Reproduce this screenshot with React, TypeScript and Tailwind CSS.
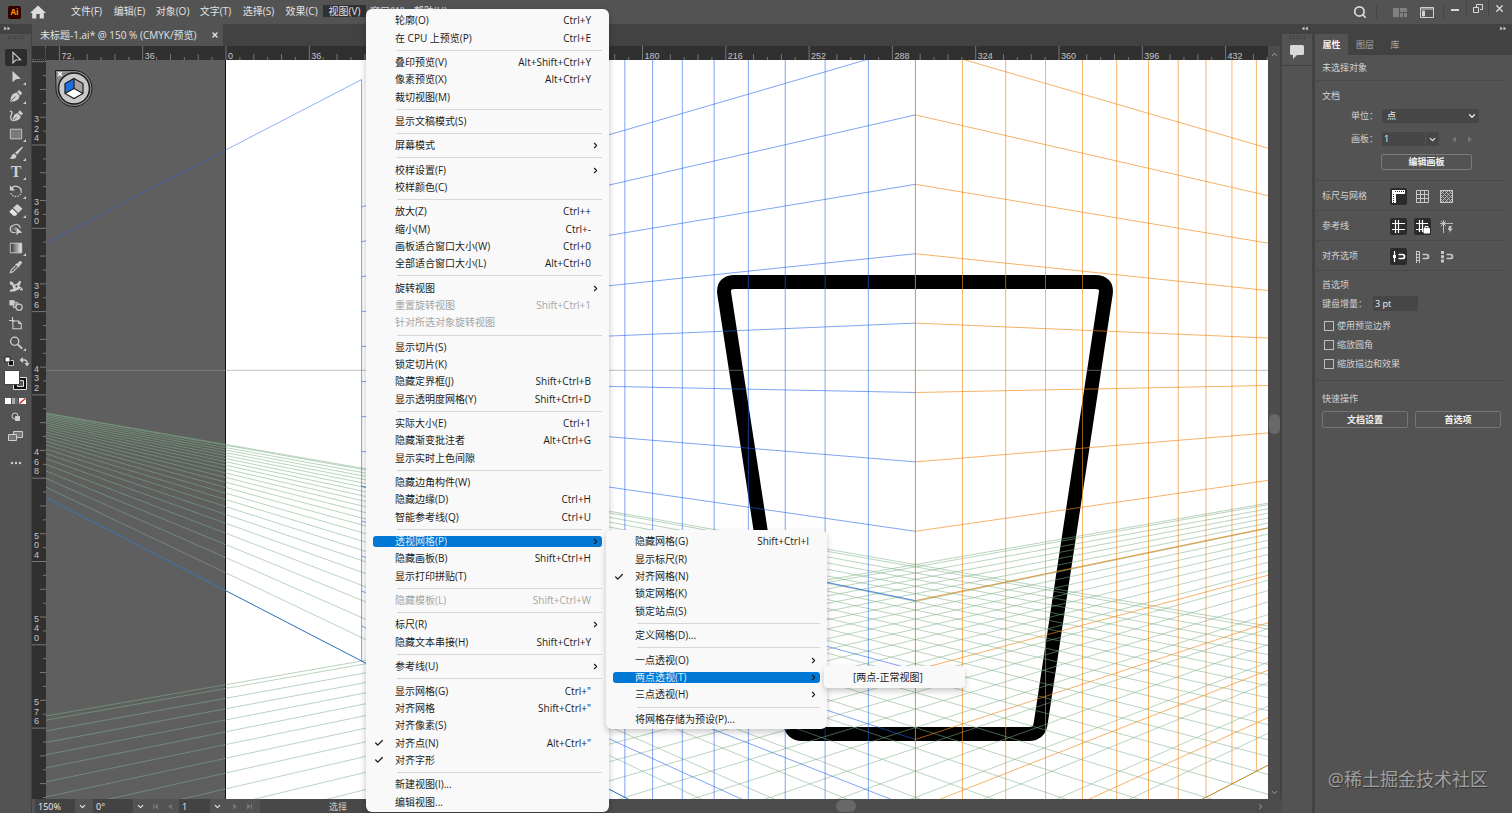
import type { ReactNode } from 'react';
import { Search, X, ChevronDown, ChevronRight, ChevronUp, Check } from 'lucide-react';

type MenuEntry = {
  label: string;
  keys?: string;
  sub?: boolean;
  checked?: boolean;
  disabled?: boolean;
  active?: boolean;
};

const menuBar = ['文件(F)', '编辑(E)', '对象(O)', '文字(T)', '选择(S)', '效果(C)', '视图(V)', '窗口(W)', '帮助(H)'];

const viewMenu: MenuEntry[][] = [
  [
    { label: '轮廓(O)', keys: 'Ctrl+Y' },
    { label: '在 CPU 上预览(P)', keys: 'Ctrl+E' },
  ],
  [
    { label: '叠印预览(V)', keys: 'Alt+Shift+Ctrl+Y' },
    { label: '像素预览(X)', keys: 'Alt+Ctrl+Y' },
    { label: '裁切视图(M)' },
  ],
  [{ label: '显示文稿模式(S)' }],
  [{ label: '屏幕模式', sub: true }],
  [{ label: '校样设置(F)', sub: true }, { label: '校样颜色(C)' }],
  [
    { label: '放大(Z)', keys: 'Ctrl++' },
    { label: '缩小(M)', keys: 'Ctrl+-' },
    { label: '画板适合窗口大小(W)', keys: 'Ctrl+0' },
    { label: '全部适合窗口大小(L)', keys: 'Alt+Ctrl+0' },
  ],
  [
    { label: '旋转视图', sub: true },
    { label: '重置旋转视图', keys: 'Shift+Ctrl+1', disabled: true },
    { label: '针对所选对象旋转视图', disabled: true },
  ],
  [
    { label: '显示切片(S)' },
    { label: '锁定切片(K)' },
    { label: '隐藏定界框(J)', keys: 'Shift+Ctrl+B' },
    { label: '显示透明度网格(Y)', keys: 'Shift+Ctrl+D' },
  ],
  [
    { label: '实际大小(E)', keys: 'Ctrl+1' },
    { label: '隐藏渐变批注者', keys: 'Alt+Ctrl+G' },
    { label: '显示实时上色间隙' },
  ],
  [
    { label: '隐藏边角构件(W)' },
    { label: '隐藏边缘(D)', keys: 'Ctrl+H' },
    { label: '智能参考线(Q)', keys: 'Ctrl+U' },
  ],
  [
    { label: '透视网格(P)', sub: true, active: true },
    { label: '隐藏画板(B)', keys: 'Shift+Ctrl+H' },
    { label: '显示打印拼贴(T)' },
  ],
  [{ label: '隐藏模板(L)', keys: 'Shift+Ctrl+W', disabled: true }],
  [{ label: '标尺(R)', sub: true }, { label: '隐藏文本串接(H)', keys: 'Shift+Ctrl+Y' }],
  [{ label: '参考线(U)', sub: true }],
  [
    { label: '显示网格(G)', keys: 'Ctrl+"' },
    { label: '对齐网格', keys: 'Shift+Ctrl+"' },
    { label: '对齐像素(S)' },
    { label: '对齐点(N)', keys: 'Alt+Ctrl+"', checked: true },
    { label: '对齐字形', checked: true },
  ],
  [{ label: '新建视图(I)...' }, { label: '编辑视图...' }],
];

const gridMenu: MenuEntry[][] = [
  [
    { label: '隐藏网格(G)', keys: 'Shift+Ctrl+I' },
    { label: '显示标尺(R)' },
    { label: '对齐网格(N)', checked: true },
    { label: '锁定网格(K)' },
    { label: '锁定站点(S)' },
  ],
  [{ label: '定义网格(D)...' }],
  [
    { label: '一点透视(O)', sub: true },
    { label: '两点透视(T)', sub: true, active: true },
    { label: '三点透视(H)', sub: true },
  ],
  [{ label: '将网格存储为预设(P)...' }],
];

const MenuList = ({ groups }: { groups: MenuEntry[][] }) => (
  <>
    {groups.map((group, gi) => (
      <div key={gi} className="contents">
        {gi > 0 && (
          <div className="flex h-[7px] shrink-0 items-center pr-[7px] pl-[31px]">
            <div className="h-px w-full bg-[#d6d6d6]" />
          </div>
        )}
        {group.map((item) => (
          <button
            key={item.label}
            type="button"
            role="menuitem"
            disabled={item.disabled}
            className={`flex min-h-0 flex-1 items-center px-[7px] ${
              item.active ? 'text-[#d9ecfb]' : item.disabled ? 'text-[#a5a5a5]' : 'text-[#1b1b1b]'
            }`}
          >
            <span className={`flex h-[11px] w-full items-center rounded-[3px] ${item.active ? 'bg-[#0078d4]' : ''}`}>
              <span className="w-[22px] shrink-0 pl-px">{item.checked && <Check size={10} strokeWidth={3} />}</span>
              <span className="grow text-left">{item.label}</span>
              {item.keys && <span className="pr-[11px]">{item.keys}</span>}
              {item.sub && <ChevronRight size={9} strokeWidth={3} className="mr-[2px] text-[#1b1b1b]" />}
            </span>
          </button>
        ))}
      </div>
    ))}
  </>
);

/* ---------- toolbar ---------- */

const tools: { name: string; more?: boolean; icon: ReactNode }[] = [
  { name: '选择工具', icon: <path d="M4.5 1.5v12l3.3-3.2 5.4-.3z" fill="none" stroke="currentColor" strokeWidth="1.3" /> },
  { name: '直接选择工具', more: true, icon: <path d="M4 1v13l4-3.5 5.5-.5z" /> },
  {
    name: '钢笔工具',
    more: true,
    icon: (
      <>
        <path d="M1.500 14.500c.3-4.500 1.200-7.500 3.500-9L8.500 4l3.700 3.700-1.200 3.500C9.500 13.500 6 14.500 1.500 14.500z" />
        <path d="M9.300 3.300 11.500 1 15.200 4.800l-2.200 2.200z" />
        <path d="M2.500 13.500 7.500 8.500" stroke="#535353" />
      </>
    ),
  },
  {
    name: '曲率工具',
    icon: (
      <>
        <path d="M4 15c.3-4 1.200-6.500 3-8l2.500-1.200 4 4-1.200 2.500C10.500 14 8 15 4 15z" />
        <path d="M10.300 5 12.300 2.700 16 6.300 13.900 8.600z" />
        <path d="M1 3.500c2 0 3 1 2 3.500S.5 12 4 14.500" fill="none" stroke="currentColor" strokeWidth="1.500" />
        <path d="M5 14l4-4" stroke="#535353" />
      </>
    ),
  },
  { name: '矩形工具', more: true, icon: <path d="M1.500 2.500h13v11h-13z" fill="#7a7a7a" stroke="currentColor" /> },
  {
    name: '画笔工具',
    more: true,
    icon: (
      <>
        <path d="M15 .5 7 7.800l2.200 2.200 6.800-8.500z" />
        <path d="M6 8.500 8.500 11c0 3.500-3.500 4.500-8 3.300 2.500-.5 1.800-5 5.500-5.800z" />
      </>
    ),
  },
  {
    name: '文字工具',
    more: true,
    icon: (
      <text x="8" y="14" textAnchor="middle" fontSize="18" fontWeight="bold" fontFamily="Liberation Serif, serif">
        T
      </text>
    ),
  },
  {
    name: '旋转工具',
    more: true,
    icon: (
      <>
        <path d="M3 4.500C7 .5 14 3 14 8.500" fill="none" stroke="currentColor" strokeWidth="1.500" />
        <path d="M14 8.500c0 7-11 8-12 1" fill="none" stroke="currentColor" strokeWidth="1.500" strokeDasharray="1.500 1.500" />
        <path d="M1 1.500v6h6z" />
      </>
    ),
  },
  {
    name: '橡皮擦工具',
    more: true,
    icon: (
      <>
        <path d="M9.500 1 15.500 6.500l-5 5L4.500 5.500z" />
        <path d="M3.700 6.500 9.700 12.300 7.700 14.500H5L1 10.500V9.500z" fill="#e6e6e6" />
      </>
    ),
  },
  {
    name: '形状生成器工具',
    icon: (
      <>
        <path d="M7.500 12H5a4 4 0 0 1-.5-7.900A5 5 0 0 1 13 7" fill="none" stroke="currentColor" strokeWidth="1.300" />
        <path d="M3 8h6M7 5v6" stroke="currentColor" strokeDasharray="1 1" />
        <path d="M8.500 6v9l2.700-2.500 4-.2z" />
      </>
    ),
  },
  { name: '渐变工具', more: true, icon: <path d="M1.500 2.500h13v11h-13z" fill="url(#toolFade)" stroke="currentColor" /> },
  {
    name: '吸管工具',
    icon: (
      <>
        <path d="M9 4.500 12 1.500c1.500-1 3.500 1 2.500 2.500l-3 3 .7.700-1.200 1.200L7.100 5l1.200-1.200z" />
        <path d="M7.500 6.500 2.500 11.500 1.500 14.500l3-1 5-5" fill="none" stroke="currentColor" strokeWidth="1.300" />
      </>
    ),
  },
  {
    name: '操控变形工具',
    icon: (
      <>
        <path d="M1 3c3-.5 4 1 4.500 3.500C7 5.500 9 6 10 4.500L12 2l2 1-1.500 3.500L11.500 8l4 2.500v3l-5-1.500-3.500 2-6 .5v-2L5 11 3.500 7 1 6z" />
        <circle cx="8.500" cy="8.500" r="1.300" fill="#535353" />
        <path d="M1 9.500h3M11 13l3-3" stroke="#535353" />
      </>
    ),
  },
  {
    name: '混合工具',
    icon: (
      <>
        <path d="M.5 2.500h6v6h-6z" />
        <path d="M5 5h5v6H5z" fill="#8f8f8f" stroke="currentColor" />
        <circle cx="11.500" cy="10.500" r="3.500" fill="#535353" stroke="currentColor" strokeWidth="1.300" />
      </>
    ),
  },
  {
    name: '画板工具',
    icon: <path d="M4 0v6M0 4h6M4.500 4.500h6.500l3 3v6h-9.500zM11 4.500v3h3" fill="none" stroke="currentColor" strokeWidth="1.200" />,
  },
  {
    name: '缩放工具',
    more: true,
    icon: (
      <>
        <circle cx="6.500" cy="6" r="4.700" fill="none" stroke="currentColor" strokeWidth="1.500" />
        <path d="m10 9.500 5 5" stroke="currentColor" strokeWidth="2.200" />
      </>
    ),
  },
];

const DoubleArrow = ({ left = false }: { left?: boolean }) => (
  <svg width="6" height="9" viewBox="0 0 6 9" fill="#d0d0d0">
    {left ? <path d="M2.500 2.500v4l-2.500-2zM5.800 2.500v4l-2.500-2z" /> : <path d="M.2 2.500v4l2.500-2zM3.500 2.500v4l2.500-2z" />}
  </svg>
);

const Toolbar = () => (
  <aside className="flex w-8 shrink-0 flex-col border-r border-[#424242] bg-[#535353] text-[#cfcfcf]">
    <div className="h-[10px] bg-[#424242] pl-1">
      <DoubleArrow />
    </div>
    <div className="mx-auto mt-[2px] mb-[9px] h-[3px] w-4 border-y border-dotted border-[#3a3a3a]" />
    {tools.map((tool, i) => (
      <button
        key={tool.name}
        type="button"
        aria-label={tool.name}
        className="relative flex h-[19px] w-full shrink-0 items-center justify-center"
      >
        <span className={`flex h-[17px] w-[22px] items-center justify-center rounded-[2px] ${i === 0 ? 'bg-[#2d2d2d]' : ''}`}>
          <svg width="14" height="14" viewBox="0 0 16 16" fill="currentColor">
            {tool.name === '渐变工具' && (
              <linearGradient id="toolFade">
                <stop stopColor="#333" />
                <stop offset="1" stopColor="#eee" />
              </linearGradient>
            )}
            {tool.icon}
          </svg>
        </span>
        {tool.more && (
          <svg className="absolute right-[5px] bottom-px" width="3" height="3" viewBox="0 0 3 3">
            <path d="M3 0v3H0z" fill="#cfcfcf" />
          </svg>
        )}
      </button>
    ))}
    <button type="button" aria-label="填色和描边" className="mt-1 flex justify-center">
      <svg width="28" height="54" viewBox="0 0 28 54" fill="none">
        <path d="M6.500 4.500h5v5h-5z" fill="#111" stroke="#ccc" />
        <path d="M3 1h5v5H3z" fill="#fff" stroke="#222" />
        <path d="M20 4h2.500c2 0 2.500 1 2.500 3" stroke="#ccc" strokeWidth="1.300" />
        <path d="m21 1-3.500 3L21 7zM22.500 7h5L25 10.500z" fill="#ccc" />
        <path d="M11.500 21.500h13v12h-13z" fill="#111" stroke="#ddd" />
        <path d="M15.500 24.500h6v6h-6z" fill="#535353" stroke="#ddd" />
        <path d="M2.500 14.500h15v14h-15z" fill="#fff" stroke="#444" />
        <path d="M3 42h6v6H3z" fill="#fff" />
        <path d="M10 42h6v6h-6z" fill="#aaa" />
        <path d="M13 42h3v6h-3z" fill="#666" />
        <path d="M17 42h7v6h-7z" fill="#fff" />
        <path d="m17.500 47.500 6-5" stroke="#d22" strokeWidth="1.500" />
      </svg>
    </button>
    <button type="button" aria-label="绘图模式" className="flex h-[14px] items-center justify-center">
      <svg width="12" height="12" viewBox="0 0 12 12" fill="none" stroke="currentColor">
        <circle cx="5" cy="5" r="3" />
        <path d="M5.500 5.500h4v4h-4z" fill="#cfcfcf" />
      </svg>
    </button>
    <button type="button" aria-label="更改屏幕模式" className="flex h-6 items-center justify-center">
      <svg width="15" height="12" viewBox="0 0 15 12" fill="#777" stroke="currentColor">
        <path d="M5.500 1.500h9v6h-9z" />
        <path d="M.5 4.500h8v6h-8z" />
      </svg>
    </button>
    <button type="button" aria-label="编辑工具栏" className="mt-[7px] flex h-4 items-center justify-center">
      <svg width="12" height="4" viewBox="0 0 12 4" fill="currentColor">
        <circle cx="2" cy="2" r="1.200" />
        <circle cx="6" cy="2" r="1.200" />
        <circle cx="10" cy="2" r="1.200" />
      </svg>
    </button>
  </aside>
);

/* ---------- rulers and canvas ---------- */

const UNIT = 83.3;

const HRuler = () => {
  const ticks = [];
  for (let i = -12; i < 76; i++) {
    const x = 180 + (i * UNIT) / 6;
    const major = i % 6 === 0;
    ticks.push(<path key={i} d={`M${x} ${major ? 0 : i % 2 ? 11 : 8}V14`} stroke="#777" />);
    if (major) {
      ticks.push(
        <text key={`t${i}`} x={x + 2} y="13" fontSize="9" fill="#c4c4c4">
          {Math.abs(i * 6)}
        </text>,
      );
    }
  }
  return (
    <svg className="h-[14px] w-full bg-[#303030]" fontFamily="Liberation Sans, sans-serif">
      {ticks}
    </svg>
  );
};

const VRuler = () => {
  const ticks = [];
  for (let i = -6; i < 54; i++) {
    const y = 85 + (i * UNIT) / 6;
    const major = i % 6 === 0;
    ticks.push(<path key={i} d={`M${major ? 0 : i % 2 ? 11 : 8} ${y}H14`} stroke="#777" />);
    if (major && i >= 0 && i <= 42) {
      String(324 + i * 6)
        .split('')
        .forEach((digit, k) =>
          ticks.push(
            <text key={`${i}-${k}`} x="2" y={y - 23 + k * 9.5} fontSize="9" fill="#c4c4c4">
              {digit}
            </text>,
          ),
        );
    }
  }
  return (
    <svg className="h-full w-[14px] shrink-0 bg-[#303030]" fontFamily="Liberation Sans, sans-serif">
      {ticks}
    </svg>
  );
};

// two point perspective grid
const CX = 915.4;
const HY = 370.3;
const D = 1115;
const K = 22.7;
const CELL = 69.4;
const FLOOR = 577.6;
const LAST = 22.4;

const offset = (n: number) => (D * n) / (n + K);
const EDGE = offset(LAST);

const Artwork = () => {
  const wall = (dir: number) => {
    const parts = [];
    for (let n = 1; n <= 22; n++) {
      const d = offset(n);
      const h = FLOOR * (1 - d / D);
      parts.push(`M${CX + dir * d} ${HY - h}V${HY + h}`);
    }
    const eh = FLOOR * (1 - EDGE / D);
    parts.push(`M${CX + dir * EDGE} ${HY - eh}V${HY + eh}`);
    for (let r = -8; r <= 4; r++) {
      const h = 230.4 + r * CELL;
      parts.push(`M${CX} ${HY + h}L${CX + dir * EDGE} ${HY + h * (1 - EDGE / D)}`);
    }
    return parts.join('');
  };
  // floor lines run through each vanishing point
  const floor = [];
  for (const n of [...Array(23).keys(), LAST]) {
    const drop = ((FLOOR * K) / (2 * n + K)) * 2;
    floor.push(`M${CX - D} ${HY}L${CX + D} ${HY + drop}M${CX + D} ${HY}L${CX - D} ${HY + drop}`);
  }
  const bottom = (dir: number) => `M${CX + dir * D} ${HY}L${CX} ${HY + FLOOR}`;
  const base = (dir: number) => `M${CX + dir * EDGE} ${HY + 230.4 * (1 - EDGE / D)}L${CX} ${HY + 230.4}`;

  return (
    <svg className="h-full min-w-0 flex-1 bg-[#5f5f5f]" role="img" aria-label="画板">
      <g transform="translate(-46 -60)" fill="none">
        <path d="M226 0H1400V900H226z" fill="#fff" />
        <path d="M225.500 0V900" stroke="#111" />
        <path
          d="M735 282H1095Q1107.500 282 1105.700 294L1040.600 724Q1039 734 1029 734H802Q792 734 790.400 724L724.300 294Q722.500 282 735 282Z"
          stroke="#000"
          strokeWidth="14"
        />
        <path d={floor.join('')} stroke="#80b086" strokeOpacity=".55" />
        <path d={`M0 ${HY}H1400`} stroke="#8a968a" strokeOpacity=".6" />
        <path d={wall(-1)} stroke="#2463ea" strokeOpacity=".58" />
        <path d={wall(1)} stroke="#f08a1c" strokeOpacity=".66" />
        <path d={`M${CX - D} ${HY}L${CX - EDGE} ${HY - FLOOR * (1 - EDGE / D)}`} stroke="#2463ea" strokeOpacity=".5" />
        <path d={base(-1)} stroke="#2468c8" strokeOpacity=".4" />
        <path d={base(1)} stroke="#c8841a" strokeOpacity=".4" />
        <path d={bottom(-1)} stroke="#2468c8" strokeOpacity=".85" />
        <path d={bottom(1)} stroke="#c8841a" strokeOpacity=".85" />
        <path d={`M${CX} 0V900`} stroke="#cf8432" strokeOpacity=".9" />

        {/* plane switching widget */}
        <path d="M55.500 70.500H74A18 18 0 1 1 56 88.500z" fill="#8a8a8a" stroke="#1c1c1c" />
        <circle cx="74" cy="88.500" r="15.500" fill="#c9c9c9" stroke="#1c1c1c" strokeWidth="1.500" />
        <path d="m74 78.500-9 5v10l9-5z" fill="#1f6fe0" />
        <path d="m74 78.500 9 5v10l-9-5z" fill="#a8a0a0" />
        <path d="m74 88.500 9 5-9 5-9-5z" fill="#fff" />
        <path d="m74 78.500 9 5v10l-9 5-9-5v-10zM74 78.500v10l9 5M74 88.500l-9 5" stroke="#1c1c1c" strokeWidth="1.200" />
        <path d="m58 72 4 4M62 72l-4 4" stroke="#fff" strokeWidth="1.200" />
      </g>
    </svg>
  );
};

/* ---------- status bar ---------- */

const Combo = ({ label, value, className }: { label: string; value: string; className: string }) => (
  <div className="flex h-full items-center">
    <input aria-label={label} defaultValue={value} className={`h-full bg-[#434343] pl-[3px] text-[9px] text-[#f0f0f0] ${className}`} />
    <button type="button" aria-label={`${label}列表`} className="flex w-[14px] justify-center text-[#e8e8e8]">
      <ChevronDown size={9} strokeWidth={3} />
    </button>
  </div>
);

const Step = ({ label, flip, bar }: { label: string; flip?: boolean; bar?: boolean }) => (
  <button type="button" aria-label={label} className="flex w-[14px] justify-center">
    <svg width="8" height="7" viewBox="0 0 8 7" fill="#757575" stroke="none">
      {flip ? <path d="M2 .5v6l4-3z" /> : <path d="M6 .5v6l-4-3z" />}
      {bar && <path d={flip ? 'M6 .5h1v6H6z' : 'M1 .5h1v6H1z'} />}
    </svg>
  </button>
);

const StatusBar = () => (
  <footer className="flex h-[14px] shrink-0 items-center bg-[#535353] pl-[3px]">
    <Combo label="缩放" value="150%" className="w-[40px]" />
    <div className="w-[4px]" />
    <Combo label="旋转" value="0°" className="w-[40px]" />
    <div className="flex w-[32px] justify-center">
      <Step label="首个画板" bar />
      <Step label="上一个画板" />
    </div>
    <Combo label="画板" value="1" className="w-[31px]" />
    <div className="flex w-[36px] justify-center">
      <Step label="下一个画板" flip />
      <Step label="末个画板" flip bar />
    </div>
    <div className="flex h-full w-[330px] items-center bg-[#484848] pt-[2px] pl-[69px] text-[9px] text-[#d0d0d0]">选择</div>
    <div className="flex h-full min-w-0 grow items-center bg-[#4c4c4c]">
      <div className="flex grow">
        <div className="ml-[37%] h-3 w-5 rounded-full bg-[#686868]" />
      </div>
      <ChevronRight size={9} className="mr-[17px] text-[#bbb]" />
    </div>
  </footer>
);

/* ---------- properties panel ---------- */

const IconButton = ({ label, on, children }: { label: string; on?: boolean; children: ReactNode }) => (
  <button
    type="button"
    aria-label={label}
    aria-pressed={!!on}
    className={`flex size-[17px] items-center justify-center rounded-[2px] ${on ? 'bg-[#2b2b2b] text-white' : 'text-[#c8c8c8]'}`}
  >
    <svg width="15" height="15" viewBox="0 0 15 15" fill="none" stroke="currentColor">
      {children}
    </svg>
  </button>
);

const IconRow = ({ title, children }: { title: string; children: ReactNode }) => (
  <div className="flex h-[30px] items-center border-b border-[#494949] pt-px pl-[6px]">
    <span className="w-[68px]">{title}</span>
    <div className="flex gap-[7px]">{children}</div>
  </div>
);

const Magnet = () => <path d="M7.500 5.500h4a2 2 0 0 1 0 4h-4" strokeWidth="1.700" />;

const Properties = () => (
  <aside className="flex w-[200px] shrink-0 flex-col border-l-[3px] border-[#424242] bg-[#535353] text-[9px] leading-4 text-[#d2d2d2]">
    <div className="flex h-[10px] justify-end bg-[#424242] pr-[6px]">
      <DoubleArrow />
    </div>
    <div role="tablist" className="flex h-[21px] bg-[#424242] text-[#a8a8a8]">
      <button type="button" role="tab" className="w-[33px] bg-[#535353] font-bold text-[#f2f2f2]">
        属性
      </button>
      <button type="button" role="tab" className="w-[34px]">
        图层
      </button>
      <button type="button" role="tab" className="w-[26px]">
        库
      </button>
    </div>
    <div className="flex flex-col pr-[7px] pl-px">
      <div className="flex h-[26px] items-center border-b border-[#494949] pt-px pl-[6px]">未选择对象</div>

      <section className="h-[100px] border-b border-[#494949] pt-[7px] pl-[6px]">
        <h2>文档</h2>
        <div className="mt-[5px] flex h-[14px] items-center">
          <label htmlFor="unit" className="w-[60px] pr-[4px] text-right">
            单位：
          </label>
          <div className="relative flex items-center">
            <select id="unit" className="h-[14px] w-[97px] appearance-none rounded-[2px] bg-[#464646] pl-[5px] text-[9px] leading-[14px] text-[#f2f2f2]">
              <option>点</option>
            </select>
            <ChevronDown size={10} strokeWidth={3} className="pointer-events-none absolute right-[2px] text-[#eee]" />
          </div>
        </div>
        <div className="mt-[9px] flex h-[14px] items-center">
          <label htmlFor="board" className="w-[60px] pr-[4px] text-right">
            画板：
          </label>
          <input id="board" defaultValue="1" className="h-[14px] w-[43px] bg-[#464646] pl-[2px] text-[9px] text-[#f2f2f2]" />
          <button type="button" aria-label="选择画板" className="ml-px flex h-[14px] w-[13px] items-center justify-center bg-[#464646] text-[#eee]">
            <ChevronDown size={9} strokeWidth={3} />
          </button>
          <div className="ml-[8px] flex gap-[2px]">
            <Step label="上一个" />
            <Step label="下一个" flip />
          </div>
        </div>
        <button type="button" className="mt-[8px] ml-[59px] flex h-4 w-[91px] items-center justify-center rounded-[2px] border border-[#7a7a7a] font-bold text-[#f2f2f2]">
          编辑画板
        </button>
      </section>

      <IconRow title="标尺与网格">
        <IconButton label="显示标尺" on>
          <path d="M1 1h13v4H5v9H1z" fill="#fff" stroke="none" />
          <path d="M4 2.500h10" stroke="#2b2b2b" strokeDasharray="1 1" />
          <path d="M2.500 5v9" stroke="#2b2b2b" strokeDasharray="1 1" />
        </IconButton>
        <IconButton label="显示网格">
          <path d="M1.500 1.500h12v12h-12zM5.500 1.500v12M9.500 1.500v12M1.500 5.500h12M1.500 9.500h12" />
        </IconButton>
        <IconButton label="显示透明度网格">
          <path d="M1.500 1.500h12v12h-12z" />
          <path d="M1.500 5.500l4-4M1.500 9.500l8-8M1.500 13.500l12-12M5.500 13.500l8-8M9.500 13.500l4-4M9.500 1.500l4 4M5.500 1.500l8 8M1.500 1.500l12 12M1.500 5.500l8 8M1.500 9.500l4 4" strokeWidth=".8" />
        </IconButton>
      </IconRow>
      <IconRow title="参考线">
        <IconButton label="显示参考线" on>
          <path d="M1 4.500h13M1 10.500h13M4.500 1v13M7.500 1v13" strokeWidth="1.200" />
        </IconButton>
        <IconButton label="锁定参考线" on>
          <path d="M1 4.500h12M1 10.500h7M4.500 1v12M7.500 1v12" strokeWidth="1.200" />
          <path d="M9 9.500h5.500v4.500H9z" fill="#fff" />
          <path d="M10 9V7.500h3V9" />
        </IconButton>
        <IconButton label="智能参考线">
          <path d="M1 4.500h13M4.500 1v13M2 2l5 5M7 2 2 7" strokeWidth=".9" />
          <path d="M10 7h3l-1.500 2.500H14L10 14l.8-3H9z" fill="currentColor" stroke="none" />
        </IconButton>
      </IconRow>
      <IconRow title="对齐选项">
        <IconButton label="对齐点" on>
          <path d="M3.500 2v11" strokeWidth="1.200" />
          <path d="M2 6h3v3H2z" fill="#fff" stroke="none" />
          <Magnet />
        </IconButton>
        <IconButton label="对齐像素">
          <path d="M1.500 2v12M4.500 2v12M1 2.500h4M1 5.500h4M1 8.500h4M1 11.500h4" />
          <Magnet />
        </IconButton>
        <IconButton label="对齐网格">
          <path d="M2 2h3v3H2zM2 6.200h3v3H2zM2 10.500h3v3H2z" fill="currentColor" stroke="none" />
          <Magnet />
        </IconButton>
      </IconRow>

      <section className="h-[110px] border-b border-[#494949] pt-[6px] pl-[6px]">
        <h2>首选项</h2>
        <div className="mt-[3px] mb-[5px] flex h-[15px] items-center">
          <label htmlFor="nudge" className="w-[51px]">
            键盘增量：
          </label>
          <input id="nudge" defaultValue="3 pt" className="h-[15px] w-[45px] bg-[#464646] pl-[2px] text-[9px] text-[#f2f2f2]" />
        </div>
        {['使用预览边界', '缩放圆角', '缩放描边和效果'].map((text) => (
          <label key={text} className="flex h-[19px] items-center gap-[3px] pl-[2px]">
            <input type="checkbox" className="size-[10px] appearance-none border border-[#bdbdbd]" />
            {text}
          </label>
        ))}
      </section>

      <section className="pt-[10px] pl-[6px]">
        <h2>快速操作</h2>
        <div className="mt-[4px] flex gap-[7px] font-bold text-[#f2f2f2]">
          <button type="button" className="h-[17px] w-[86px] rounded-[2px] border border-[#747474]">
            文档设置
          </button>
          <button type="button" className="h-[17px] w-[86px] rounded-[2px] border border-[#747474]">
            首选项
          </button>
        </div>
      </section>
    </div>
  </aside>
);

/* ---------- window ---------- */

const TitleBar = () => (
  <header className="flex h-6 shrink-0 items-center bg-[#535353] text-[10px] text-[#e2e2e2]">
    <div className="ml-2 flex size-[13px] items-center justify-center rounded-[2px] bg-[#300] text-[8px] font-bold text-[#ff9a00]">Ai</div>
    <button type="button" aria-label="主页" className="ml-[9px]">
      <svg width="16" height="14" viewBox="0 0 16 14" fill="#dcdcdc">
        <path d="M8 .5 16 8h-2.200v5.500H9.700V9H6.300v4.500H2.200V8H0z" />
      </svg>
    </button>
    <nav className="mt-[5px] ml-[19px] flex self-start">
      {menuBar.map((item) => (
        <button
          key={item}
          type="button"
          className={`h-3 w-[43px] text-center leading-3 whitespace-nowrap ${item === '视图(V)' ? 'bg-[#303030]' : ''}`}
        >
          {item}
        </button>
      ))}
    </nav>
    <div className="grow" />
    <button type="button" aria-label="搜索" className="text-[#d8d8d8]">
      <Search size={14} strokeWidth={3} />
    </button>
    <div className="ml-[9px] h-4 w-px bg-[#484848]" />
    <button type="button" aria-label="排列文档" className="ml-4">
      <svg width="14" height="9" viewBox="0 0 14 9" fill="#808080">
        <path d="M0 0h6v9H0zM7 0h7v4H7zM7 5h3v4H7zM11 5h3v4h-3z" />
      </svg>
    </button>
    <button type="button" aria-label="切换工作区" className="ml-[13px]">
      <svg width="14" height="11" viewBox="0 0 14 11" fill="none" stroke="#d0d0d0">
        <path d="M.5.5h13v10H.5zM.5 2h13" />
        <path d="M2.500 4h2v5h-2z" fill="#d0d0d0" />
      </svg>
    </button>
    <div className="ml-[9px] h-4 w-px bg-[#484848]" />
    <div className="mr-[2px] flex h-[16px] self-start">
      <button type="button" aria-label="最小化" className="flex w-[22px] items-center justify-center">
        <span className="mt-1 h-[2px] w-2 bg-[#d8d8d8]" />
      </button>
      <button type="button" aria-label="还原" className="flex w-[23px] items-center justify-center border-x border-[#484848]">
        <svg width="10" height="9" viewBox="0 0 10 9" fill="none" stroke="#d8d8d8">
          <path d="M3.500 3V.5h6v5H7M.5 3.500h5v5h-5z" />
        </svg>
      </button>
      <button type="button" aria-label="关闭" className="flex w-[21px] items-center justify-center text-[#d8d8d8]">
        <X size={11} strokeWidth={3} />
      </button>
    </div>
  </header>
);

const App = () => (
  <div
    className="relative flex h-screen flex-col overflow-hidden bg-[#535353]"
    style={{ fontFamily: '"Open Sans", "Noto Sans CJK SC", sans-serif' }}
  >
    <TitleBar />
    <div className="flex min-h-0 flex-1">
      <Toolbar />

      <main className="flex min-w-0 flex-1 flex-col">
        <div className="flex h-[22px] shrink-0 bg-[#424242]">
          <div className="flex w-[191px] items-center justify-between bg-[#535353] pr-[4px] pl-2 text-[10px] whitespace-nowrap text-[#e2e2e2]">
            未标题-1.ai* @ 150 % (CMYK/预览)
            <button type="button" aria-label="关闭文档">
              <X size={8} strokeWidth={4} />
            </button>
          </div>
        </div>
        <div className="flex min-h-0 flex-1">
          <div className="flex min-w-0 flex-1 flex-col">
            <div className="flex h-[14px] shrink-0 bg-[#303030]">
              <div className="w-[14px] shrink-0 border-r border-b border-dotted border-[#666]" />
              <HRuler />
            </div>
            <div className="flex min-h-0 flex-1">
              <VRuler />
              <Artwork />
            </div>
          </div>
          <div className="flex w-[14px] shrink-0 flex-col items-center border-r-2 border-[#424242] bg-[#4c4c4c] pt-1 pb-[2px] text-[#bbb]">
            <ChevronUp size={9} />
            <div className="grow" />
            <div className="h-5 w-[11px] rounded-full bg-[#686868]" />
            <div className="grow" />
            <ChevronDown size={9} />
          </div>
        </div>
        <StatusBar />
      </main>

      <aside className="flex w-[30px] shrink-0 flex-col bg-[#535353]">
        <div className="flex h-[10px] justify-end bg-[#424242] pr-1">
          <DoubleArrow left />
        </div>
        <div className="flex h-8 flex-col items-center border-b border-[#424242]">
          <div className="mt-[2px] mb-[6px] h-[3px] w-4 border-y border-dotted border-[#3a3a3a]" />
          <button type="button" aria-label="注释">
            <svg width="14" height="14" viewBox="0 0 14 14" fill="#d8d8d8">
              <path d="M1.500 0h11A1.500 1.500 0 0 1 14 1.500v7a1.500 1.500 0 0 1-1.500 1.500H7l-4 4v-4H1.500A1.500 1.500 0 0 1 0 8.500v-7A1.500 1.500 0 0 1 1.500 0z" />
            </svg>
          </button>
        </div>
      </aside>
      <Properties />
    </div>

    <div className="pointer-events-none absolute right-[24px] bottom-[20px] text-[18px] leading-7 text-[#a0a0a0] [text-shadow:1px_1px_1px_#333]">
      @稀土掘金技术社区
    </div>

    <div
      role="menu"
      className="absolute top-[9px] left-[366px] flex h-[803px] w-[243px] flex-col rounded-[6px] bg-[#f9f9f9] pt-[3px] pb-px text-[10px] leading-[11px] whitespace-nowrap shadow-[0_2px_6px_rgba(0,0,0,0.25)]"
    >
      <MenuList groups={viewMenu} />
    </div>
    <div
      role="menu"
      className="absolute top-[530px] left-[606px] flex h-[199px] w-[221px] flex-col rounded-[6px] bg-[#f9f9f9] pt-[3px] pb-px text-[10px] leading-[11px] whitespace-nowrap shadow-[0_3px_6px_rgba(0,0,0,0.22)]"
    >
      <MenuList groups={gridMenu} />
    </div>
    <div
      role="menu"
      className="absolute top-[666px] left-[824px] flex h-[22px] w-[141px] flex-col rounded-[4px] bg-[#f9f9f9] py-[2px] text-[10px] leading-[11px] whitespace-nowrap shadow-[0_3px_6px_rgba(0,0,0,0.22)]"
    >
      <MenuList groups={[[{ label: '[两点-正常视图]' }]]} />
    </div>
  </div>
);

export default App;
